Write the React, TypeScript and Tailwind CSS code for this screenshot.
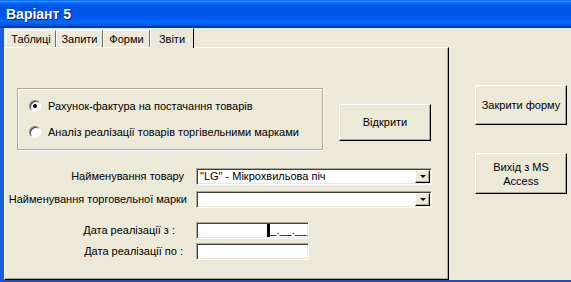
import React from 'react';

const raised =
  'border border-t-white border-l-white border-r-black border-b-black shadow-[inset_-1px_-1px_0_#aca899] bg-[#ece9d8]';
const sunken =
  'border border-t-[#aca899] border-l-[#aca899] border-r-white border-b-white shadow-[inset_1px_1px_0_#404040,inset_-1px_-1px_0_#ece9d8] bg-white';

function Radio({ checked }: { checked?: boolean }) {
  return (
    <span className="w-[12px] h-[12px] rounded-full border border-t-[#808080] border-l-[#808080] border-r-white border-b-white bg-white shadow-[inset_1px_1px_0_#404040] flex items-center justify-center">
      {checked && <span className="w-[4px] h-[4px] rounded-full bg-black" />}
    </span>
  );
}

function Combo({ value }: { value?: string }) {
  return (
    <div className={`w-[236px] h-[17px] flex items-center ${sunken}`}>
      <span className="flex-1 pl-[3px] leading-none truncate">{value}</span>
      <span className={`w-[15px] h-[13px] mr-[1px] flex items-center justify-center ${raised}`}>
        <span className="w-0 h-0 border-l-[3px] border-r-[3px] border-t-[3px] border-l-transparent border-r-transparent border-t-black" />
      </span>
    </div>
  );
}

function Tab({ label, active, w }: { label: string; active?: boolean; w: string }) {
  if (active) {
    return (
      <div
        className={`${w} h-[20px] -mb-[1px] relative z-10 bg-[#ece9d8] border-t border-l border-r border-t-white border-l-white border-r-black flex items-start justify-center pt-[2px]`}
      >
        {label}
      </div>
    );
  }
  return (
    <div
      className={`${w} h-[17px] bg-[#ece9d8] border-t border-l border-r border-t-white border-l-white border-r-[#716f64] flex items-center justify-center`}
    >
      {label}
    </div>
  );
}

export default function App() {
  return (
    <div className="w-[571px] h-[282px] overflow-hidden flex flex-col bg-[#ece9d8] text-[11px] text-black font-['Liberation_Sans',Arial,sans-serif]">
      <div className="h-[28px] shrink-0 flex items-center pl-[6px] text-white font-bold text-[14px] [text-shadow:1px_1px_0_#0a1e8c] bg-[linear-gradient(to_bottom,#0058ee_0%,#3593ff_4%,#288eff_6%,#127dff_8%,#036ffc_10%,#0262ee_14%,#0057e5_20%,#0054e3_24%,#0055eb_56%,#005bf5_66%,#026afe_76%,#0062ef_86%,#0052d6_92%,#0040ab_94%,#003092_100%)]">
        Варіант 5
      </div>

      <div className="flex-1 flex border-l-[4px] border-l-[#1a5be0] border-b-2 border-b-[#1a4fd0]">
        <div className="w-[445px] flex flex-col">
          <div className="h-[19px] flex items-end pl-[2px]">
            <Tab label="Таблиці" w="w-[50px]" />
            <Tab label="Запити" w="w-[47px]" />
            <Tab label="Форми" w="w-[47px]" />
            <Tab label="Звіти" w="w-[44px]" active />
          </div>

          <div className="flex-1 border border-t-white border-l-white border-r-black border-b-black shadow-[inset_-1px_-1px_0_#aca899] pt-[40px]">
            <div className="flex items-start pl-[12px]">
              <div className="w-[306px] h-[62px] border border-[#aca899] shadow-[inset_1px_1px_0_#fff,1px_1px_0_#fff] flex flex-col justify-center gap-[9px] pl-[11px]">
                <label className="flex items-center gap-[7px]">
                  <Radio checked />
                  <span>Рахунок-фактура на постачання товарів</span>
                </label>
                <label className="flex items-center gap-[7px]">
                  <Radio />
                  <span>Аналіз реалізації товарів торгівельними марками</span>
                </label>
              </div>
              <button className={`ml-[16px] mt-[16px] w-[92px] h-[37px] ${raised}`}>Відкрити</button>
            </div>

            <div className="mt-[18px] flex flex-col">
              <div className="flex items-center">
                <span className="w-[191px] text-right pr-[12px]">Найменування товару</span>
                <Combo value={'"LG" - Мікрохвильова піч'} />
              </div>
              <div className="flex items-center mt-[6px]">
                <span className="w-[191px] text-right pr-[9px] whitespace-nowrap">Найменування торговельної марки</span>
                <Combo />
              </div>
              <div className="flex items-center mt-[14px]">
                <span className="w-[191px] text-right pr-[21px]">Дата реалізації з :</span>
                <div className={`w-[113px] h-[17px] flex items-center justify-end pr-[1px] ${sunken}`}>
                  <span className="w-[3px] h-[13px] bg-black" />
                  <span className="leading-none">_.__.__</span>
                </div>
              </div>
              <div className="flex items-center mt-[4px]">
                <span className="w-[191px] text-right pr-[13px]">Дата реалізації по :</span>
                <div className={`w-[113px] h-[17px] ${sunken}`} />
              </div>
            </div>
          </div>
        </div>

        <div className="flex-1 flex flex-col pl-[26px] pt-[57px]">
          <button className={`w-[92px] h-[40px] ${raised}`}>Закрити форму</button>
          <button className={`mt-[28px] w-[92px] h-[41px] leading-[14px] ${raised}`}>
            Вихід з MS
            <br />
            Access
          </button>
        </div>
      </div>
    </div>
  );
}
